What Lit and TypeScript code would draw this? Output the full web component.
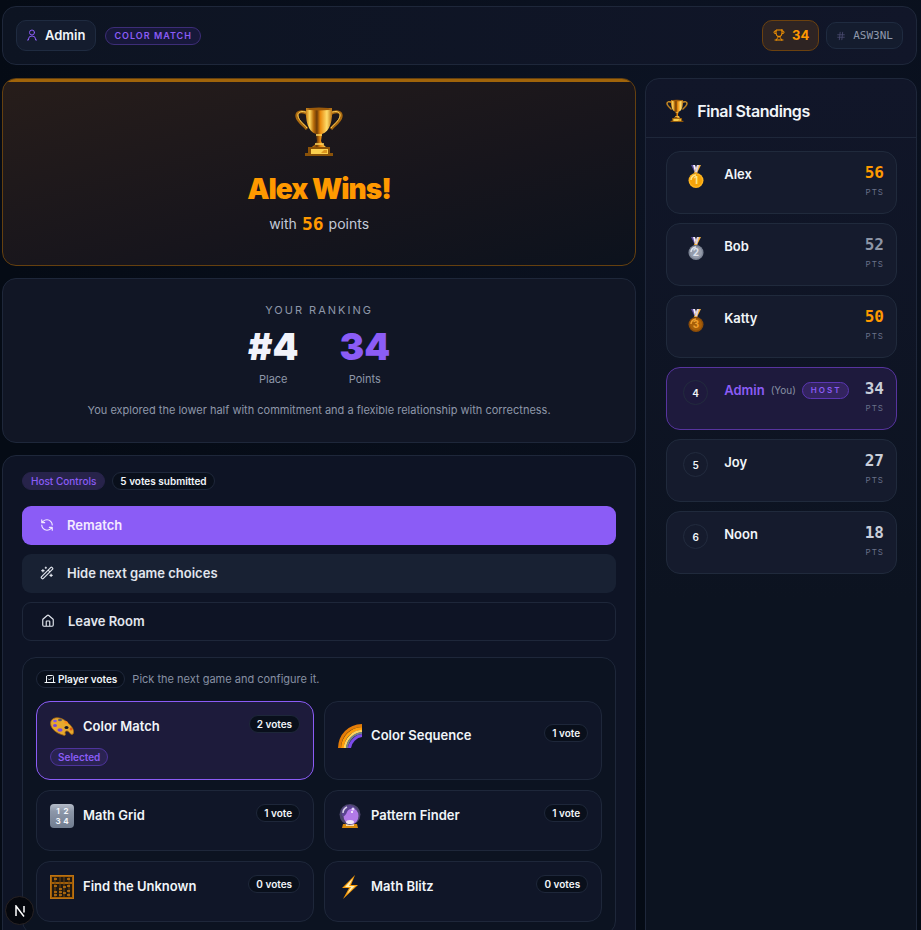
import { LitElement, html, svg, css, nothing } from "lit";
import { customElement, state } from "lit/decorators.js";
import { classMap } from "lit/directives/class-map.js";

const stroke = (size: string, body: unknown) => html`
  <svg class="line ${size}" viewBox="0 0 24 24" aria-hidden="true">${body}</svg>
`;

const lineIcons = {
  user: svg`<circle cx="12" cy="7" r="5"/><path d="M3 22h2v-2a7 6 0 0 1 14 0v2h2"/>`,
  trophy: svg`<path d="M6 9H4.500a2.500 2.500 0 0 1 0-5H6M18 9h1.500a2.500 2.500 0 0 0 0-5H18M4 22h16M10 14.660V17c0 .55-.47.98-.97 1.210C7.850 18.750 7 20.240 7 22M14 14.660V17c0 .55.47.98.97 1.210C16.150 18.750 17 20.240 17 22M18 2H6v7a6 6 0 0 0 12 0V2Z"/>`,
  hash: svg`<path d="M4 9h16M4 15h16M10 3 8 21M16 3l-2 18"/>`,
  refresh: svg`<path d="M21 12a9 9 0 0 0-9-9 9.750 9.750 0 0 0-6.740 2.740L3 8M3 3v5h5M3 12a9 9 0 0 0 9 9 9.750 9.750 0 0 0 6.740-2.740L21 16M16 16h5v5"/>`,
  wand: svg`<path d="m21.640 3.640-1.280-1.280a1.210 1.210 0 0 0-1.720 0L2.360 18.640a1.210 1.210 0 0 0 0 1.720l1.280 1.280a1.200 1.200 0 0 0 1.720 0L21.640 5.360a1.200 1.200 0 0 0 0-1.720M14 7l3 3M5 6v4M19 14v4M10 2v2M7 8H3M21 16h-4M11 3H9"/>`,
  house: svg`<path d="M15 21v-8a1 1 0 0 0-1-1h-4a1 1 0 0 0-1 1v8M3 10a2 2 0 0 1 .709-1.528l7-5.999a2 2 0 0 1 2.582 0l7 5.999A2 2 0 0 1 21 10v9a2 2 0 0 1-2 2H5a2 2 0 0 1-2-2z"/>`,
  vote: svg`<path d="m9 12 2 2 4-4M5 7c0-1.100.9-2 2-2h10a2 2 0 0 1 2 2v12H5V7ZM22 19H2"/>`,
};

const trophyArt = svg`
  <defs>
    <linearGradient id="cup" x1="0" x2="1">
      <stop offset="0" stop-color="#c47a12"/><stop offset=".15" stop-color="#ffd65c"/>
      <stop offset=".3" stop-color="#b76a08"/><stop offset=".42" stop-color="#6b3a08"/>
      <stop offset=".55" stop-color="#e8890c"/><stop offset=".8" stop-color="#ffdc6a"/>
      <stop offset="1" stop-color="#b86f10"/>
    </linearGradient>
  </defs>
  <path d="M13 7C6 3 1 5 2 10c1 5 7 8 10 12M35 7c7-4 12-2 11 3-1 5-7 8-10 12" fill="none" stroke="#a8680f" stroke-width="3"/>
  <path d="M13 6C7 3 2 5 3 9c1 5 6 8 9 12M35 6c6-3 11-1 10 3-1 5-6 8-9 12" fill="none" stroke="#ffd25a" stroke-width="1"/>
  <path d="M11 1h26c1 12-2 24-10 26l-1 7c1 3 3 4 5 6H17c2-2 4-3 5-6l-1-7C13 25 10 13 11 1Z" fill="url(#cup)"/>
  <ellipse cx="24" cy="2" rx="13" ry="1.500" fill="#9c5a0a"/>
  <path d="M21 28h6M20 37h9" stroke="#ffd65c" stroke-width="1.500"/>
  <path d="M13 40h22v6h3v3H10v-3h3Z" fill="#8a5208"/>
  <path d="M16 42h17v5H16Z" fill="#fbd04e"/>
  <path d="m26 46 3-3h3v3Z" fill="#dc9620"/>
`;

const medalArt = (disc: string, rim: string, shine: string, place: number) => svg`
  <path d="M7 0h4l3 8h-3Z" fill="#5b4b9d"/><path d="M9 0h2l2 7h-2Z" fill="#f3f0ff"/>
  <path d="M17 0h-4l-3 8h3Z" fill="#f5b13c"/><path d="M15 0h-2l-2 7h2Z" fill="#d9d4ea"/>
  <circle cx="12" cy="15.500" r="7.500" fill=${rim}/>
  <circle cx="12" cy="15.500" r="6" fill=${disc}/>
  <path d="M7 15a5 5 0 0 1 5-5" fill="none" stroke=${shine} stroke-width="1.500"/>
  <text x="12" y="19" text-anchor="middle" font-family="Inter, sans-serif" font-size="10" font-weight="700" fill=${shine}>${place}</text>
`;

const medals = [
  medalArt("#f5a30a", "#ffb51f", "#ffe58a", 1),
  medalArt("#959cab", "#7d8595", "#dfe3ec", 2),
  medalArt("#a85f08", "#8d4d08", "#f0a02e", 3),
];

const gameArt: Record<string, unknown> = {
  palette: svg`
    <path d="M1 6C4 1 11 2 17 7c5 4 8 9 6 12-1 1-3 0-4-2-2-2-4-1-4 1 1 2 0 3-2 2C5 18-1 12 1 6Z" fill="#e6a92e" stroke="#a86710" stroke-width=".8"/>
    <ellipse cx="16.500" cy="12.500" rx="2" ry="1.600" fill="#111528"/>
    <ellipse cx="5" cy="6" rx="1.800" ry="1.300" fill="#8456e8"/><ellipse cx="10" cy="5" rx="2" ry="1.300" fill="#5c5966"/>
    <ellipse cx="5" cy="10.500" rx="2" ry="1.500" fill="#7445db"/><ellipse cx="10" cy="15" rx="2.600" ry="1.700" fill="#7a4be0"/>
    <ellipse cx="16" cy="7.500" rx="1.700" ry="1.200" fill="#ff8c1a"/><ellipse cx="21" cy="14" rx="1.400" ry="1.600" fill="#e25f12"/>
  `,
  rainbow: svg`
    <g fill="none">
      <path d="M1.500 24C2 11 11 2 24 1.500" stroke="#e47c08" stroke-width="3"/>
      <path d="M4.500 24C5 13 13 5 24 4.500" stroke="#ff9d0a" stroke-width="3"/>
      <path d="M7 24C7.500 15 15 7.500 24 7" stroke="#ffd45c" stroke-width="2.500"/>
      <path d="M9 24C9.500 16 16 9.500 24 9" stroke="#71808a" stroke-width="2"/>
      <path d="M11.500 24C12 18 18 12 24 11.500" stroke="#7c4bea" stroke-width="3"/>
    </g>
  `,
  digits: svg`
    <defs><linearGradient id="key" x1="0" y1="0" x2="0" y2="1">
      <stop offset="0" stop-color="#b4bbc8"/><stop offset=".3" stop-color="#8d97a9"/><stop offset="1" stop-color="#717d90"/>
    </linearGradient></defs>
    <rect width="24" height="24" rx="4" fill="url(#key)"/>
    <g font-family="Inter, sans-serif" font-size="8" font-weight="700" fill="#f4f6fa" text-anchor="middle">
      <text x="8" y="10">1</text><text x="16" y="10">2</text><text x="8" y="20">3</text><text x="16" y="20">4</text>
    </g>
  `,
  crystal: svg`
    <path d="M5 20h14l1 4H4Z" fill="#d98a0c"/><path d="M8 19h8v3H8Z" fill="#f4dcb0"/>
    <circle cx="12" cy="10.500" r="10.500" fill="#4b456b"/><ellipse cx="13" cy="12" rx="7.500" ry="8.500" fill="#b27ae8"/>
    <path d="M6 3c5-4 12-1 14 4-4-3-9-3-11 1-1 3-3 5-5 4-1-4 0-7 2-9Z" fill="#5a4490"/>
    <path d="M5 9c0-3 2-5 4-6" stroke="#d7d3e8" stroke-width="1.500" fill="none"/>
    <circle cx="15" cy="5" r="1.500" fill="#e8d6ff"/><circle cx="14" cy="8" r="1" fill="#fff"/>
    <ellipse cx="12" cy="18" rx="4" ry="2" fill="#f1e6f8"/>
  `,
  abacus: svg`
    <rect width="24" height="24" fill="#a35f08"/><path d="M2 2h20v5H2ZM2 9h20v13H2Z" fill="#211911"/>
    <path d="M5 2v20M10 2v20M14 2v20M19 2v20" stroke="#704610" stroke-width="1"/>
    <path d="M4 4h3M17 4h3M4 11h3M9 14h3M13 12h3M17 11h3M4 17h3M9 17h3M13 18h3M17 16h3M4 20h3M9 20h3M17 20h3" stroke="#c9780e" stroke-width="1.500"/>
    <rect x=".5" y=".5" width="23" height="23" fill="none" stroke="#bd7210"/>
  `,
  bolt: svg`
    <path d="M17 0 4 13l7 0-6 11L20 10l-7 0Z" fill="#f59a0b"/><path d="M15 3 7 12h6l-4 7 8-8h-6Z" fill="#fff0b3"/>
  `,
};

interface Player { name: string; points: number; tone: string; you?: boolean }
interface Game { name: string; votes: number; art: string }

const players: Player[] = [
  { name: "Alex", points: 56, tone: "amber" },
  { name: "Bob", points: 52, tone: "silver" },
  { name: "Katty", points: 50, tone: "amber" },
  { name: "Admin", points: 34, tone: "plain", you: true },
  { name: "Joy", points: 27, tone: "plain" },
  { name: "Noon", points: 18, tone: "plain" },
];

const games: Game[] = [
  { name: "Color Match", votes: 2, art: "palette" },
  { name: "Color Sequence", votes: 1, art: "rainbow" },
  { name: "Math Grid", votes: 1, art: "digits" },
  { name: "Pattern Finder", votes: 1, art: "crystal" },
  { name: "Find the Unknown", votes: 0, art: "abacus" },
  { name: "Math Blitz", votes: 0, art: "bolt" },
];

@customElement("app-root")
export class AppRoot extends LitElement {
  @state() private selected = "Color Match";

  static styles = css`
    :host {
      --edge: #1e273a;
      --violet: #8b5cf6;
      --amber: #ff9900;
      --mono: "DejaVu Sans Mono", "Liberation Mono", monospace;
      display: flex;
      flex-direction: column;
      gap: 13px;
      box-sizing: border-box;
      height: 100vh;
      overflow: hidden;
      padding: 6px 4px 0 2px;
      background: radial-gradient(circle at 75% 12%, #0c1323, #050b15 65%);
      color: #f1f5f9;
      font: 400 13px/20px Inter, sans-serif;
    }
    *, *::before { box-sizing: border-box; }
    h1, h2, p, ol, dl, dd { margin: 0; padding: 0; }
    button { font: inherit; color: inherit; cursor: pointer; }
    svg { display: block; flex: none; }
    .line { fill: none; stroke: currentColor; stroke-width: 2; stroke-linecap: round; stroke-linejoin: round; }
    .s10 { width: 10px; height: 10px; }
    .s12 { width: 12px; height: 12px; }
    .s14 { width: 14px; height: 14px; }

    .panel { border: 1px solid var(--edge); border-radius: 14px; background: #0e1424; }
    .bar { display: flex; align-items: center; gap: 9px; padding: 13px; background: linear-gradient(90deg, #0d1422, #111629); }
    .chip { display: flex; align-items: center; height: 31px; border: 1px solid #1f2b40; border-radius: 10px; background: #141c2e; }
    .me { gap: 7px; padding: 0 10px 1px 9px; font-weight: 600; }
    .me .line { color: var(--violet); }
    .mode { padding: 0 8px; height: 18px; border: 1px solid #3d2d78; border-radius: 9px; background: #17183a; color: var(--violet); font-size: 9px; line-height: 15px; font-weight: 600; letter-spacing: 1px; }
    .right { display: flex; align-items: center; gap: 7px; margin-left: auto; }
    .points { gap: 7px; padding: 0 9px 1px 10px; border-color: #6b410f; background: #2e2423; color: var(--amber); font-weight: 700; }
    .room { gap: 7px; height: 27px; padding: 0 9px; color: #8f98ab; font: 11px/20px var(--mono); }
    .room .line { color: #4b4a70; }

    .columns { display: grid; grid-template-columns: 7fr 3fr; gap: 9px; flex: 1 0 auto; }
    .left { display: flex; flex-direction: column; gap: 12px; min-width: 0; }

    .winner { display: flex; flex-direction: column; align-items: center; height: 188px; padding: 25px 20px; border-color: #65400f; overflow: hidden; background: linear-gradient(165deg, #271d1a, #17151c 60%, #0c121d); position: relative; }
    .winner::before { content: ""; position: absolute; inset: 0 0 auto; height: 3px; background: #a0640a; }
    .cup { width: 48px; height: 52px; margin-top: 2px; }
    .winner h1 { margin-top: 11px; color: var(--amber); font-size: 28px; line-height: 40px; font-weight: 900; letter-spacing: -1px; }
    .winner p { display: flex; align-items: center; gap: 5px; margin-top: 4px; color: #c3cad8; font-size: 14px; line-height: 22px; }
    .winner strong { color: var(--amber); font: 700 18px/22px var(--mono); }

    .ranking { display: flex; flex-direction: column; align-items: center; height: 165px; padding: 23px 20px; background: #111625; color: #8e97a9; font-size: 11px; line-height: 16px; }
    .ranking h2 { font-size: 11px; line-height: 16px; font-weight: 400; letter-spacing: 2px; }
    .ranking dl { display: flex; gap: 41px; margin: 8px 0 15px; }
    .ranking dl div { display: flex; flex-direction: column-reverse; align-items: center; gap: 4px; }
    .ranking dd { color: #f1f3fb; font-size: 37px; line-height: 41px; font-weight: 900; }
    .ranking .score { color: var(--violet); }

    .host { flex: 1; padding: 16px 19px; background: #0e1425; }
    .row { display: flex; align-items: center; gap: 7px; }
    .pill { display: inline-flex; align-items: center; gap: 2px; height: 18px; padding: 0 7px; border: 1px solid var(--edge); border-radius: 9px; background: #090f1b; color: #f1f5f9; font-size: 10px; line-height: 16px; font-weight: 600; white-space: nowrap; }
    .tint { padding: 0 8px; background: #27234a; border-color: #27234a; color: var(--violet); font-weight: 500; }
    .actions { display: flex; flex-direction: column; gap: 9px; margin: 16px 0; }
    .action { display: flex; align-items: center; gap: 13px; height: 39px; padding: 0 18px 1px; border: 0; border-radius: 9px; background: #182133; color: #e2e6ee; font-weight: 600; }
    .primary { background: var(--violet); color: #f3eaff; }
    .outline { border: 1px solid var(--edge); background: transparent; }

    .votes { padding: 12px 13px; background: #0c1321; }
    .votes p { color: #8790a3; font-size: 11px; line-height: 18px; }
    .games { display: grid; grid-template-columns: 1fr 1fr; gap: 10px; margin-top: 13px; }
    .game { display: flex; flex-direction: column; justify-content: center; align-items: stretch; gap: 9px; min-height: 61px; padding: 13px; border: 1px solid var(--edge); border-radius: 14px; background: #101628; text-align: left; }
    .game .row { align-items: flex-start; height: 24px; gap: 9px; }
    .game .name { flex: 1; line-height: 22px; font-weight: 600; }
    .game .extra { display: flex; }
    .art { width: 24px; height: 24px; }
    .picked { border-color: var(--violet); background: #1d1b3b; }
    .tag { border-color: #4e349c; background: #2a2352; color: var(--violet); }

    .board { display: flex; flex-direction: column; background: linear-gradient(#111629, #0c1320 60%); }
    .board header { display: flex; align-items: center; gap: 9px; height: 59px; padding: 6px 20px 0; border-bottom: 1px solid var(--edge); }
    .board h2 { font-size: 16px; line-height: 24px; font-weight: 600; letter-spacing: -0.025em; }
    .small-cup { width: 22px; height: 24px; }
    .board ol { display: flex; flex-direction: column; gap: 9px; padding: 13px 19px 20px 20px; list-style: none; }
    .player { display: flex; align-items: flex-start; height: 63px; padding: 12px 12px 12px 16px; border: 1px solid #202a3c; border-radius: 14px; background: #151b2d; }
    .badge { display: flex; align-items: center; justify-content: center; width: 25px; height: 25px; margin-right: 16px; border: 1px solid #222b3e; border-radius: 50%; font-size: 10px; font-weight: 600; }
    .badge.medal { border-color: transparent; }
    .who { display: flex; align-items: center; gap: 6px; flex: 1; line-height: 20px; font-weight: 600; }
    .you { color: #8790a3; font-size: 10px; font-weight: 400; }
    .role { height: 17px; padding: 0 7px 0 8px; border: 1px solid #5b36b3; border-radius: 9px; background: #33245f; color: var(--violet); font-size: 8px; line-height: 15px; font-weight: 600; letter-spacing: 2px; }
    .total { display: flex; flex-direction: column; align-items: flex-end; gap: 5px; color: #c9ced9; font: 700 16px/17px var(--mono); }
    .total small { color: #69718a; font: 400 8px/12px Inter, sans-serif; letter-spacing: 1px; }
    .amber { color: var(--amber); }
    .silver { color: #8d95a6; }
    .mine { border-color: #57349f; background: #1e1a3d; }
    .mine .name { color: var(--violet); }

    .dev { position: fixed; left: 5px; bottom: 5px; width: 29px; height: 29px; padding: 0; display: grid; place-items: center; border: 1px solid #292324; border-radius: 50%; background: #05070d; }
  `;

  private renderPlayer(p: Player, i: number) {
    return html`
      <li class=${classMap({ player: true, mine: !!p.you })}>
        ${i < 3
          ? html`<span class="badge medal"><svg class="art" viewBox="0 0 24 24" role="img" aria-label="Place ${i + 1}">${medals[i]}</svg></span>`
          : html`<span class="badge">${i + 1}</span>`}
        <span class="who">
          <span class="name">${p.name}</span>
          ${p.you ? html`<span class="you">(You)</span><span class="role">HOST</span>` : nothing}
        </span>
        <span class="total"><span class=${p.tone}>${p.points}</span><small>PTS</small></span>
      </li>
    `;
  }

  private renderGame(g: Game) {
    const picked = g.name === this.selected;
    return html`
      <button class=${classMap({ game: true, picked })} aria-pressed=${picked} @click=${() => (this.selected = g.name)}>
        <span class="row">
          <svg class="art" viewBox="0 0 24 24" aria-hidden="true">${gameArt[g.art]}</svg>
          <span class="name">${g.name}</span>
          <span class="pill">${g.votes} ${g.votes === 1 ? "vote" : "votes"}</span>
        </span>
        <span class="extra">${picked ? html`<span class="pill tag">Selected</span>` : nothing}</span>
      </button>
    `;
  }

  render() {
    return html`
      <header class="panel bar">
        <span class="chip me">${stroke("s12", lineIcons.user)}Admin</span>
        <span class="mode">COLOR MATCH</span>
        <div class="right">
          <span class="chip points">${stroke("s12", lineIcons.trophy)}34</span>
          <span class="chip room">${stroke("s10", lineIcons.hash)}ASW3NL</span>
        </div>
      </header>
      <main class="columns">
        <div class="left">
          <section class="panel winner">
            <svg class="cup" viewBox="0 0 48 50" aria-hidden="true">${trophyArt}</svg>
            <h1>Alex Wins!</h1>
            <p>with <strong>56</strong> points</p>
          </section>
          <section class="panel ranking">
            <h2>YOUR RANKING</h2>
            <dl>
              <div><dt>Place</dt><dd>#4</dd></div>
              <div><dt>Points</dt><dd class="score">34</dd></div>
            </dl>
            <p>You explored the lower half with commitment and a flexible relationship with correctness.</p>
          </section>
          <section class="panel host">
            <div class="row"><span class="pill tint">Host Controls</span><span class="pill">5 votes submitted</span></div>
            <div class="actions">
              <button class="action primary">${stroke("s14", lineIcons.refresh)}Rematch</button>
              <button class="action">${stroke("s14", lineIcons.wand)}Hide next game choices</button>
              <button class="action outline">${stroke("s14", lineIcons.house)}Leave Room</button>
            </div>
            <div class="panel votes">
              <div class="row"><span class="pill">${stroke("s12", lineIcons.vote)}Player votes</span><p>Pick the next game and configure it.</p></div>
              <div class="games">${games.map((g) => this.renderGame(g))}</div>
            </div>
          </section>
        </div>
        <aside class="panel board">
          <header><svg class="small-cup" viewBox="0 0 48 50" aria-hidden="true">${trophyArt}</svg><h2>Final Standings</h2></header>
          <ol>${players.map((p, i) => this.renderPlayer(p, i))}</ol>
        </aside>
      </main>
      <button class="dev" aria-label="Open developer tools">
        <svg width="12" height="12" viewBox="0 0 12 12" fill="none" stroke="#fff" stroke-width="1.500" aria-hidden="true">
          <path d="M2 11V1l8 10.500"/><path d="M10 1v6.500"/>
        </svg>
      </button>
    `;
  }
}
